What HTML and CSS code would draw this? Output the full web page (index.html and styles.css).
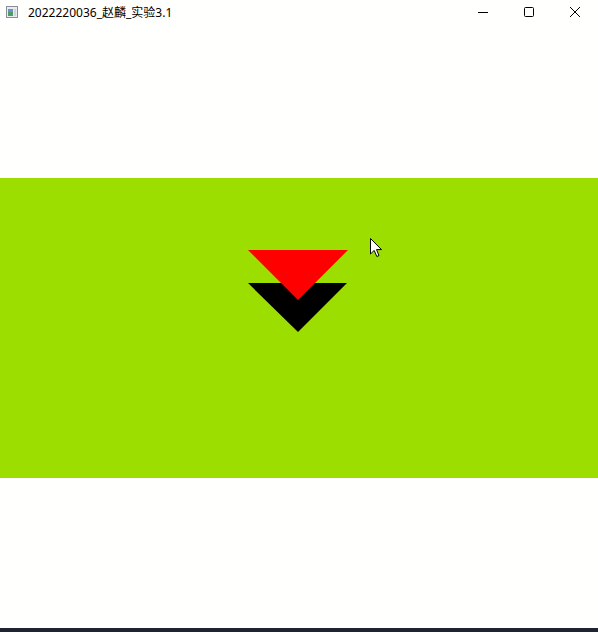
FILE: index.html
```html
<!DOCTYPE html>
<html>
<head>
<meta charset="utf-8">
<link rel="stylesheet" href="styles.css">
</head>
<body>
<div class="window">
  <div class="titlebar">
    <svg class="appicon" width="12" height="12" viewBox="0 0 12 12">
      <rect x="0.5" y="0.5" width="11" height="11" fill="#e8ecef" stroke="#8a8f95"/>
      <rect x="2" y="3" width="5" height="7" fill="#4f9a6a"/>
      <rect x="2" y="3" width="5" height="3" fill="#6f8fc8"/>
      <rect x="8" y="3" width="2" height="7" fill="#cfd4d8"/>
    </svg>
    <span class="title">2022220036_赵麟_实验3.1</span>
    <div class="controls">
      <div class="ctl">
        <svg width="12" height="12" viewBox="0 0 12 12"><line x1="1" y1="6.5" x2="11" y2="6.5" stroke="#000" stroke-width="1"/></svg>
      </div>
      <div class="ctl">
        <svg width="12" height="12" viewBox="0 0 12 12"><rect x="1.5" y="1.5" width="9" height="9" rx="1" fill="none" stroke="#000" stroke-width="1"/></svg>
      </div>
      <div class="ctl">
        <svg width="12" height="12" viewBox="0 0 12 12"><path d="M1 1 L11 11 M11 1 L1 11" stroke="#000" stroke-width="1"/></svg>
      </div>
    </div>
  </div>
  <div class="client">
    <div class="gap-top"></div>
    <div class="band">
      <svg class="arrows" width="100" height="83" viewBox="0 0 100 83">
        <polygon points="0,33 99,33 50,82" fill="#000"/>
        <polygon points="0,0 100,0 50,50" fill="#f00"/>
      </svg>
    </div>
    <div class="gap-bottom"></div>
  </div>
  <div class="taskbar"></div>
  <svg class="cursor" width="13" height="20" viewBox="0 0 13 20">
    <path d="M0.5 0.5 L0.5 16 L4.2 12.4 L6.8 18.5 L9 17.6 L6.5 11.6 L11.5 11.6 Z" fill="#fff" stroke="#000" stroke-width="1" stroke-linejoin="miter"/>
  </svg>
</div>
</body>
</html>
```
FILE: styles.css
```css
html, body {
  margin: 0;
  padding: 0;
  background: #fffffd;
}
.window {
  position: relative;
  width: 598px;
  height: 632px;
  display: flex;
  flex-direction: column;
  background: #fffffd;
  overflow: hidden;
}
.titlebar {
  height: 30px;
  display: flex;
  align-items: center;
  padding-left: 6px;
  box-sizing: border-box;
  font-family: "Noto Sans", "Noto Sans CJK SC", sans-serif;
  font-size: 12px;
  color: #000;
}
.appicon {
  margin-top: -6px;
}
.title {
  margin-left: 10px;
  margin-top: -6px;
}
.controls {
  margin-left: auto;
  display: flex;
  align-self: flex-start;
}
.ctl {
  width: 46px;
  height: 24px;
  display: flex;
  align-items: center;
  justify-content: center;
}
.ctl svg {
  display: block;
}
.client {
  display: flex;
  flex-direction: column;
  flex: 1;
}
.gap-top {
  height: 148px;
}
.band {
  height: 300px;
  background: #9bde00;
  display: flex;
  flex-direction: column;
  align-items: flex-start;
  padding-top: 72px;
  padding-left: 248px;
  box-sizing: border-box;
}
.arrows {
  display: block;
}
.gap-bottom {
  flex: 1;
}
.taskbar {
  height: 4px;
  background: #1e2430;
}
.cursor {
  position: absolute;
  left: 370px;
  top: 238px;
}
```
